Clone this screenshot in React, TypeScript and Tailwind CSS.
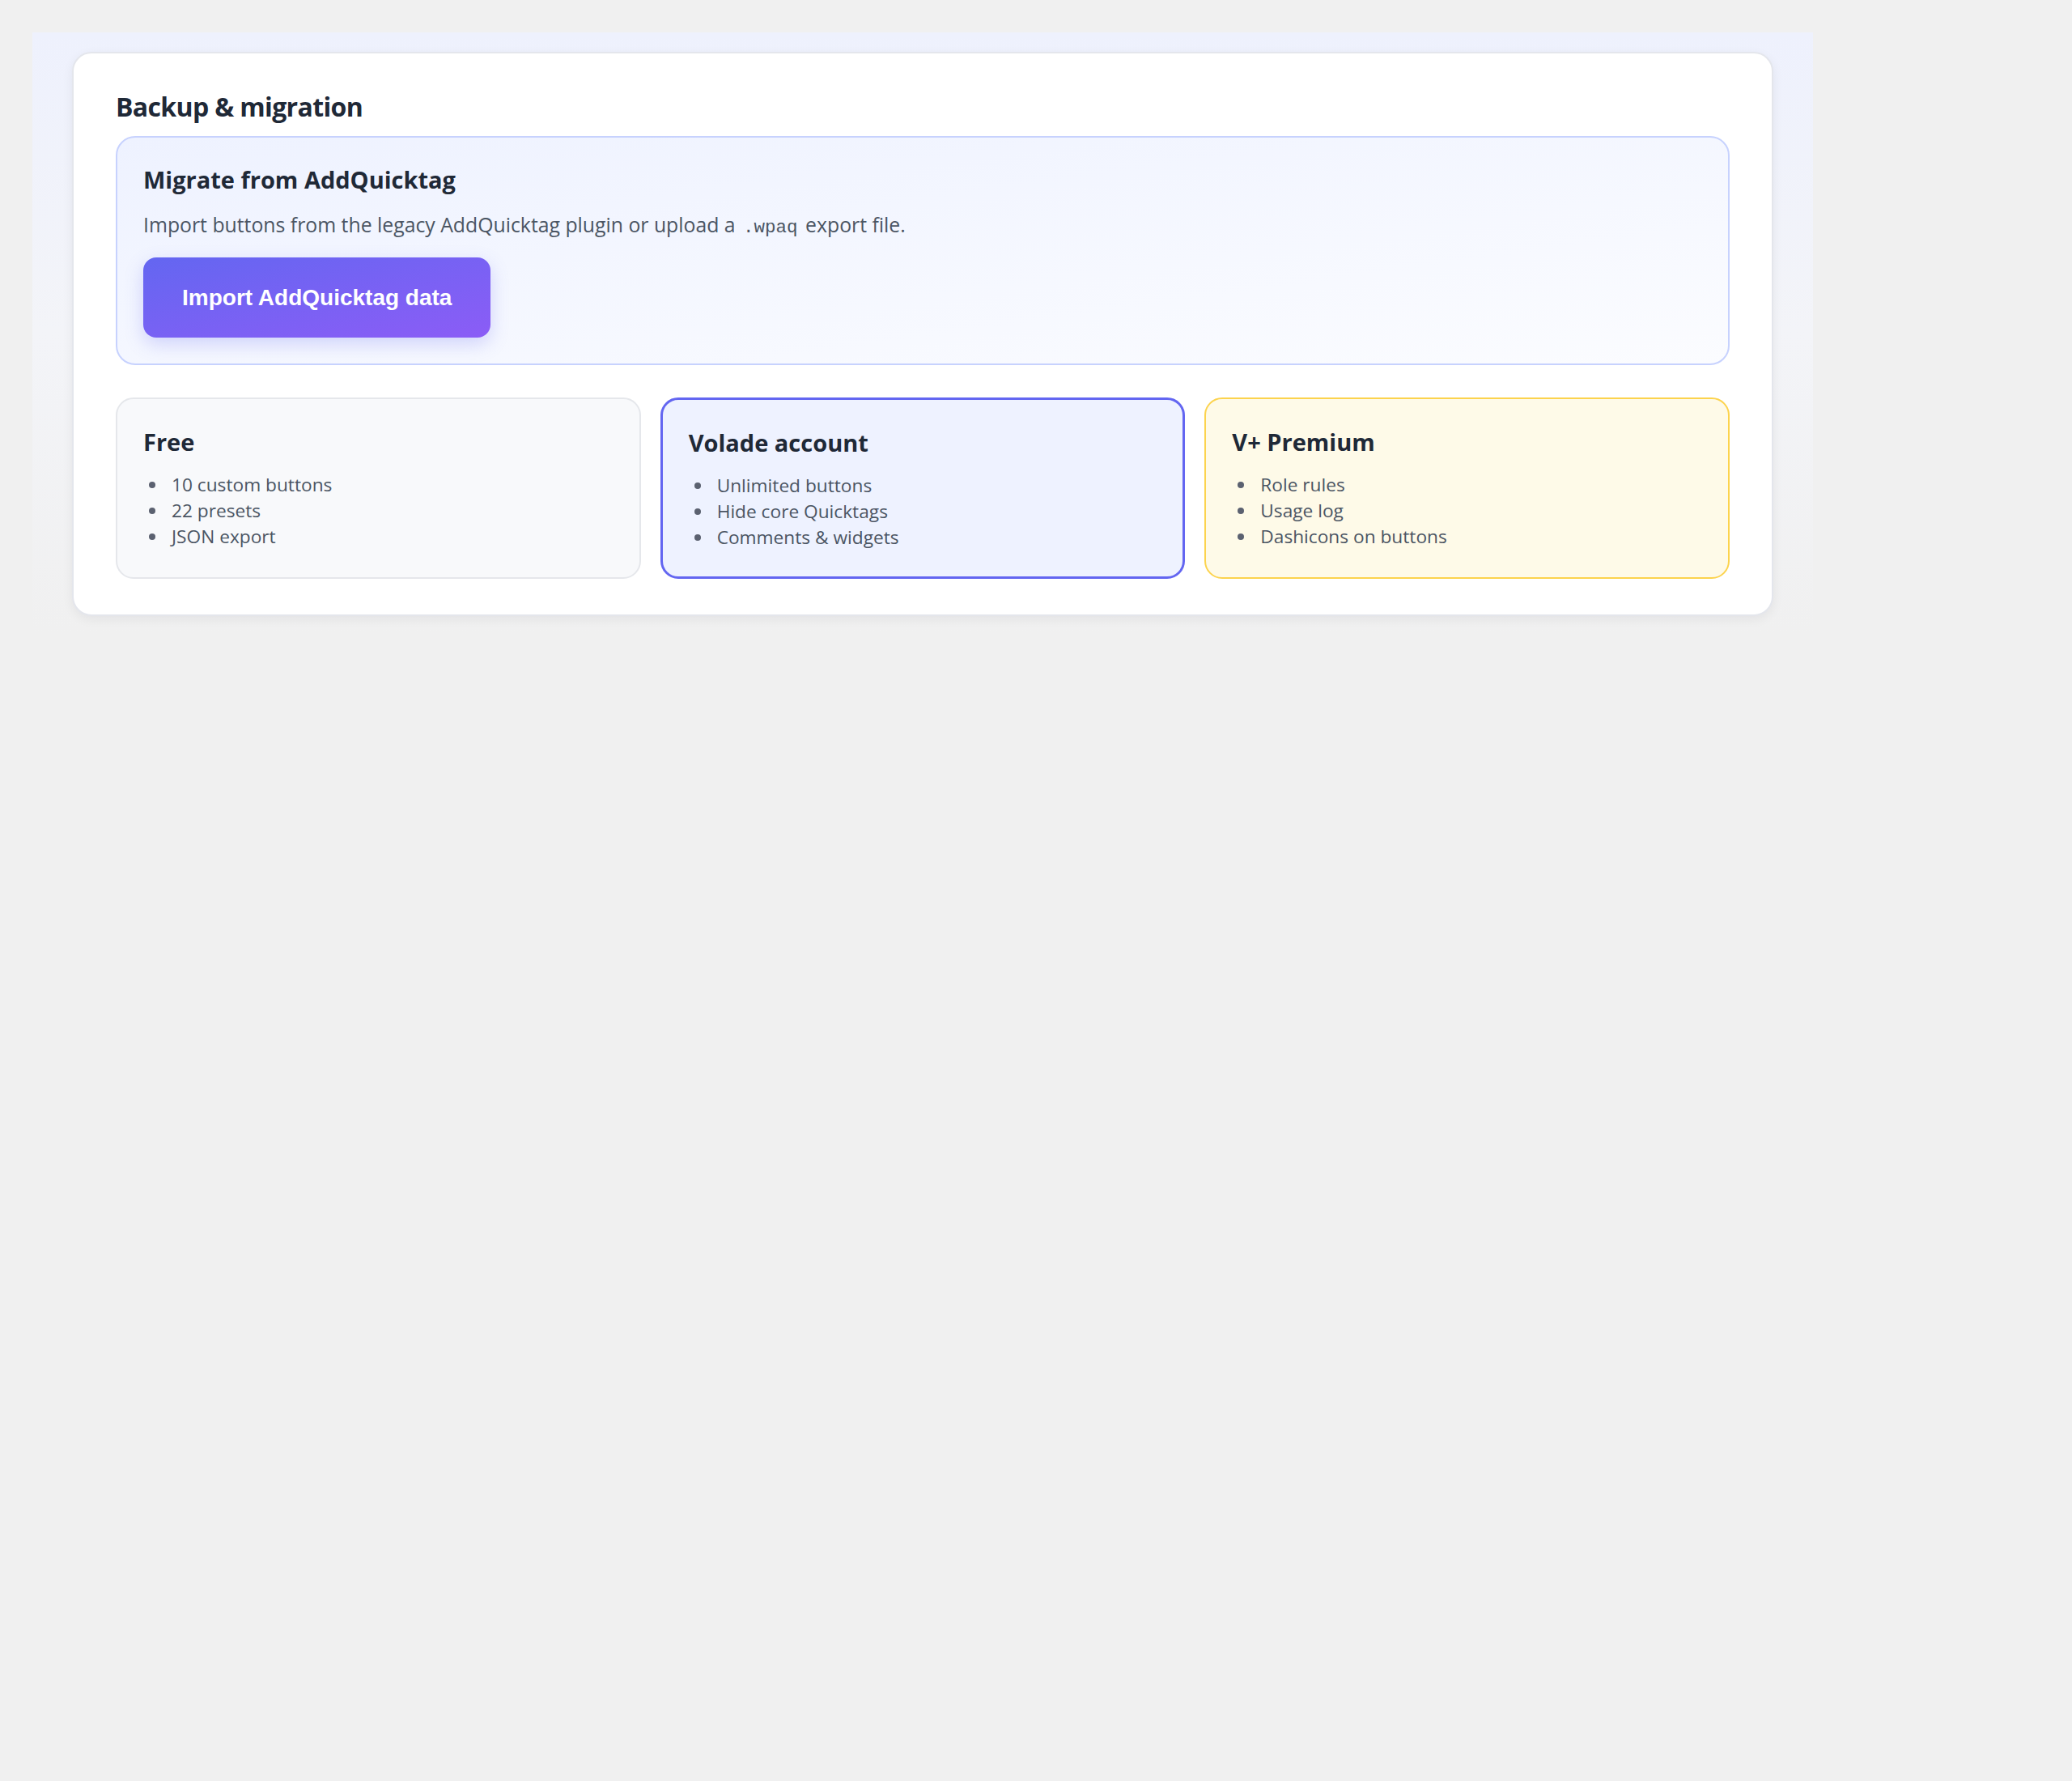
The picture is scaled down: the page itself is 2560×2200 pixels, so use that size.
import React from "react";

type Tier = {
  name: string;
  features: string[];
  box: string;
};

const tiers: Tier[] = [
  {
    name: "Free",
    features: ["10 custom buttons", "22 presets", "JSON export"],
    box: "border-2 border-[#e5e7eb] bg-[#f8f9fb]",
  },
  {
    name: "Volade account",
    features: ["Unlimited buttons", "Hide core Quicktags", "Comments & widgets"],
    box: "border-[3px] border-[#6366f1] bg-[#eef2ff]",
  },
  {
    name: "V+ Premium",
    features: ["Role rules", "Usage log", "Dashicons on buttons"],
    box: "border-2 border-[#fcd34d] bg-[#fefae8]",
  },
];

function TierCard({ tier }: { tier: Tier }) {
  return (
    <div className={`rounded-[22px] px-[32px] pt-[34px] pb-[32px] ${tier.box}`}>
      <h4 className="text-[29px] leading-[38px] font-bold text-[#1f2937]">{tier.name}</h4>
      <ul className="mt-[18px] list-disc pl-[30px] text-[22.7px] leading-[32px] text-[#4b5563] marker:text-[#5b6170]">
        {tier.features.map((f) => (
          <li key={f} className="pl-[5px]">{f}</li>
        ))}
      </ul>
    </div>
  );
}

export default function App() {
  return (
    <div className="min-h-screen bg-[#f0f0f0] pt-10 pl-10" style={{ fontFamily: '"Open Sans", "Noto Sans", sans-serif' }}>
      <div className="w-[2200px] bg-gradient-to-b from-[#eef1fd] via-[#f3f4f8] to-[#f0f0f0] px-[49px] pt-6 pb-6">
        {/* Settings card */}
        <section className="rounded-[24px] border-2 border-[#e4e6ec] bg-white px-[52px] pt-[46px] pb-[44px] shadow-[0_4px_14px_rgba(15,23,42,0.06)]">
          <h2 className="text-[32px] leading-[40px] font-bold tracking-[-0.02em] text-[#1f2937]">Backup &amp; migration</h2>

          {/* Migration box */}
          <div className="mt-4 rounded-[24px] border-2 border-[#c7d2fe] bg-gradient-to-br from-[#eef2ff] to-[#fbfcff] px-[32px] pt-[33px] pb-[32px]">
            <h3 className="text-[29px] leading-[38px] font-bold text-[#1f2937]">Migrate from AddQuicktag</h3>
            <p className="mt-[18px] text-[24.8px] leading-[36px] text-[#4b5563]">
              Import buttons from the legacy AddQuicktag plugin or upload a{" "}
              <code className="px-[3px] text-[22.5px]" style={{ fontFamily: '"Liberation Mono", monospace' }}>.wpaq</code>{" "}
              export file.
            </p>
            <button
              type="button"
              className="mt-[19px] flex h-[99px] items-center rounded-[16px] bg-gradient-to-br from-[#6366f1] to-[#8b5cf6] px-[48px] text-[28px] font-bold text-white shadow-[0_8px_22px_rgba(99,102,241,0.25)]"
              style={{ fontFamily: '"Liberation Sans", Arial, sans-serif' }}
            >
              Import AddQuicktag data
            </button>
          </div>

          {/* Plan comparison */}
          <div className="mt-[40px] grid grid-cols-3 gap-6">
            {tiers.map((t) => (
              <TierCard key={t.name} tier={t} />
            ))}
          </div>
        </section>
      </div>
    </div>
  );
}
